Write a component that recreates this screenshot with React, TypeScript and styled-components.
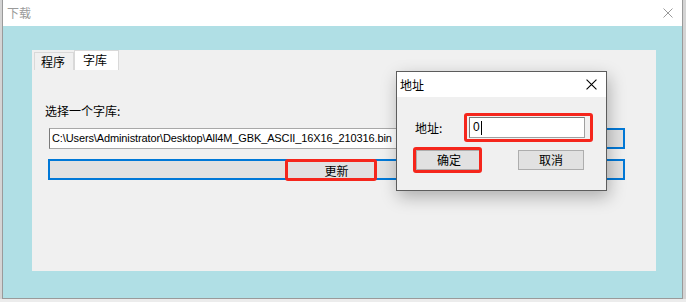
import styled, { createGlobalStyle } from "styled-components";

const GlobalStyle = createGlobalStyle`
  body {
    margin: 0;
    background: #d4d4d4;
    font-family: "Noto Sans CJK SC", "Noto Sans", sans-serif;
    font-size: 12px;
    color: #000;
  }
`;

const Desktop = styled.div`
  position: relative;
  width: 686px;
  height: 302px;
  overflow: hidden;
  background: linear-gradient(to bottom, #d4d4d4 0, #d4d4d4 299px, #ececec 299px);
`;

const Window = styled.div`
  margin-left: 2px;
  width: 681px;
  height: 299px;
  box-sizing: border-box;
  border: 1px solid #9a9a9a;
  border-top: none;
  display: flex;
  flex-direction: column;
`;

const TitleBar = styled.div`
  height: 26px;
  flex: none;
  background: #fff;
  display: flex;
  align-items: flex-start;
  justify-content: space-between;
  padding: 0 9px 0 4px;
`;

const Title = styled.span<{ $inactive?: boolean }>`
  font-size: 12px;
  line-height: 16px;
  margin-top: 5px;
  color: ${(p) => (p.$inactive ? "#9a9a9a" : "#000")};
`;

const CloseGlyph = styled.svg`
  display: block;
`;

const Body = styled.div`
  flex: 1;
  background: #b0dfe5;
  padding: 24px 26px 27px 29px;
  display: flex;
`;

const Panel = styled.div`
  flex: 1;
  background: #f0f0f0;
  display: flex;
  flex-direction: column;
`;

const TabStrip = styled.div`
  display: flex;
  align-items: flex-end;
  height: 20px;
  padding-left: 2px;
`;

const Tab = styled.div<{ $active?: boolean }>`
  box-sizing: border-box;
  height: ${(p) => (p.$active ? 20 : 18)}px;
  width: ${(p) => (p.$active ? 45 : 40)}px;
  padding-left: ${(p) => (p.$active ? 8 : 6)}px;
  background: ${(p) => (p.$active ? "#fff" : "#f0f0f0")};
  border: 1px solid #d9d9d9;
  border-bottom: none;
  line-height: ${(p) => (p.$active ? 18 : 17)}px;
  font-size: 12px;
`;

const Page = styled.div`
  display: flex;
  flex-direction: column;
  padding-left: 16px;
`;

const FieldLabel = styled.div`
  margin: 33px 0 0 -3px;
  line-height: 16px;
`;

const PathRow = styled.div`
  display: flex;
  margin: 9px 0 0 1px;
  height: 21px;
`;

const PathInput = styled.div`
  box-sizing: border-box;
  width: 534px;
  height: 21px;
  background: #fff;
  border: 1px solid #a8a8a8;
  border-right: none;
  border-left-color: #7a7a7a;
  padding-left: 2px;
  font-family: "Liberation Sans", Arial, sans-serif;
  font-size: 11px;
  letter-spacing: -0.12px;
  line-height: 19px;
  white-space: nowrap;
  overflow: hidden;
`;

const BrowseButton = styled.div`
  box-sizing: border-box;
  width: 42px;
  height: 21px;
  background: #e1e1e1;
  border: 2px solid #0078d7;
`;

const UpdateButton = styled.div`
  position: relative;
  box-sizing: border-box;
  margin-top: 10px;
  width: 577px;
  height: 21px;
  background: #e1e1e1;
  border: 2px solid #0078d7;
  display: flex;
  align-items: center;
  justify-content: center;
  line-height: 16px;
  padding-top: 2px;
`;

const Mark = styled.span<{ $t: number; $r: number; $b: number; $l: number }>`
  position: absolute;
  top: ${(p) => p.$t}px;
  right: ${(p) => p.$r}px;
  bottom: ${(p) => p.$b}px;
  left: ${(p) => p.$l}px;
  border: 3px solid #f5261c;
  border-radius: 3px;
  pointer-events: none;
`;

const Dialog = styled.div`
  position: absolute;
  left: 396px;
  top: 71px;
  width: 211px;
  height: 120px;
  box-sizing: border-box;
  border: 1px solid #5c5c5c;
  box-shadow: 2px 6px 16px rgba(0, 0, 0, 0.28);
  display: flex;
  flex-direction: column;
`;

const DialogTitleBar = styled(TitleBar)`
  height: 25px;
  padding: 0 9px 0 3px;
`;

const DialogBody = styled.div`
  flex: 1;
  background: #f0f0f0;
  display: flex;
  flex-direction: column;
  padding: 20px 0 0 18px;
`;

const DialogRow = styled.div`
  display: flex;
  align-items: center;
  height: 21px;
`;

const DialogLabel = styled.span`
  width: 54px;
  line-height: 16px;
  padding-top: 1px;
`;

const FieldWrap = styled.div`
  position: relative;
`;

const AddressInput = styled.div`
  box-sizing: border-box;
  width: 116px;
  height: 21px;
  background: #fff;
  border: 1px solid #a0a0a0;
  border-top-color: #7a7a7a;
  border-left-color: #7a7a7a;
  padding-left: 3px;
  font-family: "Liberation Sans", Arial, sans-serif;
  font-size: 12px;
  line-height: 19px;
  display: flex;
  align-items: center;
`;

const Caret = styled.span`
  display: inline-block;
  width: 1px;
  height: 14px;
  background: #000;
  margin-left: 1px;
`;

const ButtonRow = styled.div`
  display: flex;
  gap: 36px;
  margin: 12px 0 0 1px;
`;

const DialogButton = styled.div`
  position: relative;
  box-sizing: border-box;
  width: 66px;
  height: 20px;
  background: #e1e1e1;
  border: 1px solid #adadad;
  display: flex;
  align-items: center;
  justify-content: center;
  line-height: 16px;
`;

const CloseX = ({ size, color }: { size: number; color: string }) => (
  <CloseGlyph width={size} height={size} viewBox="0 0 10 10">
    <path d="M0.5 0.5 L9.5 9.5 M9.5 0.5 L0.5 9.5" stroke={color} strokeWidth="1" fill="none" />
  </CloseGlyph>
);

export default function App() {
  return (
    <>
      <GlobalStyle />
      <Desktop>
        <Window>
          <TitleBar>
            <Title $inactive>下载</Title>
            <span style={{ marginTop: 8 }}>
              <CloseX size={10} color="#9a9a9a" />
            </span>
          </TitleBar>
          <Body>
            <Panel>
              <TabStrip>
                <Tab>程序</Tab>
                <Tab $active>字库</Tab>
              </TabStrip>
              <Page>
                <FieldLabel>选择一个字库:</FieldLabel>
                <PathRow>
                  <PathInput>C:\Users\Administrator\Desktop\All4M_GBK_ASCII_16X16_210316.bin</PathInput>
                  <BrowseButton />
                </PathRow>
                <UpdateButton>
                  更新
                  <Mark $t={-2} $b={-3} $l={235} $r={246} />
                </UpdateButton>
              </Page>
            </Panel>
          </Body>
        </Window>

        <Dialog>
          <DialogTitleBar>
            <Title>地址</Title>
            <span style={{ marginTop: 7 }}>
              <CloseX size={11} color="#000" />
            </span>
          </DialogTitleBar>
          <DialogBody>
            <DialogRow>
              <DialogLabel>地址:</DialogLabel>
              <FieldWrap>
                <AddressInput>
                  0<Caret />
                </AddressInput>
                <Mark $t={-4} $r={-8} $b={-4} $l={-5} />
              </FieldWrap>
            </DialogRow>
            <ButtonRow>
              <DialogButton>
                确定
                <Mark $t={-4} $r={-1} $b={-4} $l={-4} />
              </DialogButton>
              <DialogButton>取消</DialogButton>
            </ButtonRow>
          </DialogBody>
        </Dialog>
      </Desktop>
    </>
  );
}
